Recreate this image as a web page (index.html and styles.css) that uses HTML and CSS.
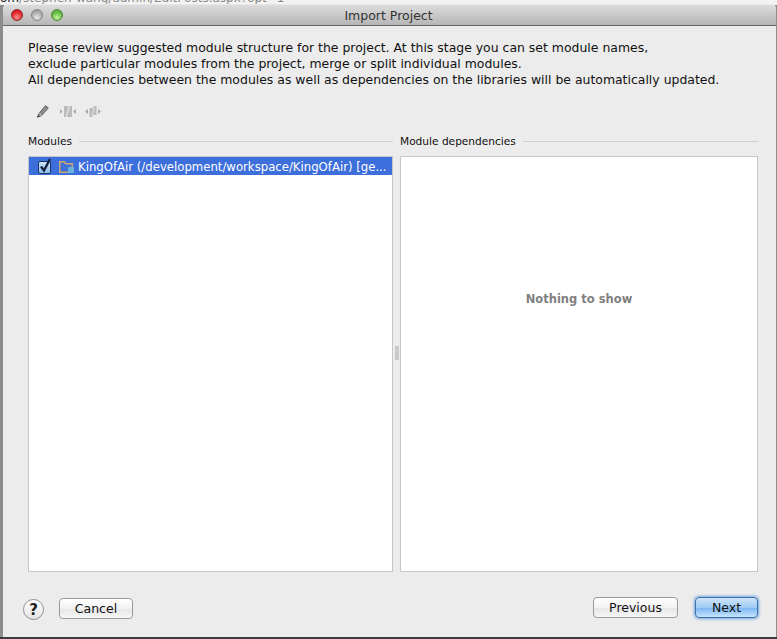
FILE: index.html
```html
<!DOCTYPE html>
<html lang="en">
<head>
<meta charset="utf-8">
<title>Import Project</title>
<link rel="stylesheet" href="styles.css">
</head>
<body>
<div class="behind"><span class="behind-text"><b class="behind-dark">om</b>/stephen-wang/admin/EditPosts.aspx?opt=1</span></div>
<main class="window">
  <header class="titlebar">
    <div class="lights">
      <span class="light red"></span>
      <span class="light grey"></span>
      <span class="light green"></span>
    </div>
    <div class="title">Import Project</div>
  </header>
  <div class="content">
    <p class="intro">Please review suggested module structure for the project. At this stage you can set module names,<br>exclude particular modules from the project, merge or split individual modules.<br>All dependencies between the modules as well as dependencies on the libraries will be automatically updated.</p>
    <div class="toolbar">
      <svg class="tool pencil" width="13" height="13" viewBox="0 0 13 13"><path d="M9.500 0.700l2.800 2.300-7 7.800-3.300 1.200 0.800-3.300z" fill="#8f8f8f" stroke="#5e5e5e" stroke-width="1"/><path d="M3.400 8.800l2 1.700" stroke="#dedede" stroke-width="1"/><path d="M1 12.500l0.500-2 1.500 1.200z" fill="#222"/></svg>
      <svg class="tool" width="16" height="11" viewBox="0 0 16 11"><path d="M0 3l2.500 2.500-2.500 2.500zM16 3l-3 2.500 3 2.500z" fill="#a8a8a8"/><path d="M4 0h8v11h-8z" fill="#bababa"/><path d="M8.500 0h1.500l-3 11h-1.500z" fill="#e2e2e2"/></svg>
      <svg class="tool" width="16" height="11" viewBox="0 0 16 11"><path d="M3 3l-3 2.500 3 2.500zM13 3l3 2.500-3 2.500z" fill="#a8a8a8"/><path d="M4.500 2h3.500v9h-3.500zM8 0h3.500v9h-3.500z" fill="#bababa"/><path d="M6.800 11l2-11h1l-2 11z" fill="#e2e2e2"/></svg>
    </div>
    <div class="panes">
      <section class="pane left">
        <div class="pane-head"><span>Modules</span><span class="rule"></span></div>
        <div class="box">
          <div class="row">
            <span class="check"><svg width="14" height="16" viewBox="0 0 14 16"><path d="M3 8.500l3 4L12 1" fill="none" stroke="#13233f" stroke-width="2.400"/></svg></span>
            <svg class="folder" width="15" height="12" viewBox="0 0 15 12"><path d="M0.750 0.750h4.500l1.500 2h6.500v8.500h-12.500z" fill="#3f6fd8" stroke="#cda673" stroke-width="1.500"/><rect x="9" y="6" width="6" height="6" fill="#6cb3dc"/></svg>
            <span class="row-text">KingOfAir (/development/workspace/KingOfAir) [ge...</span>
          </div>
        </div>
      </section>
      <div class="splitter"><span class="grip"></span></div>
      <section class="pane right">
        <div class="pane-head"><span>Module dependencies</span><span class="rule"></span></div>
        <div class="box empty">Nothing to show</div>
      </section>
    </div>
    <footer class="footer">
      <div class="footer-side cancel-side">
        <button class="help" type="button">?</button>
        <button class="btn" type="button">Cancel</button>
      </div>
      <div class="footer-side wide">
        <button class="btn prev" type="button">Previous</button>
        <button class="btn next" type="button">Next</button>
      </div>
    </footer>
  </div>
</main>
</body>
</html>
```
FILE: styles.css
```css
* { box-sizing: border-box; }
html, body { margin: 0; padding: 0; }
body {
  width: 777px;
  height: 639px;
  position: relative;
  overflow: hidden;
  background: linear-gradient(#8c8c8c 0, #8c8c8c 637px, #3c3c3c 637px);
  font-family: "DejaVu Sans", sans-serif;
  font-size: 12.5px;
  color: #111;
}
.behind {
  height: 5px;
  background: #f2f2f2;
  overflow: hidden;
  position: relative;
}
.behind-text {
  position: absolute;
  left: 0;
  top: -10px;
  font-size: 12px;
  line-height: 16px;
  color: #8a8a8a;
  white-space: nowrap;
}
.behind-dark {
  font-weight: normal;
  color: #111;
}
.window {
  position: absolute;
  left: 3px;
  top: 4px;
  width: 773px;
  height: 633px;
  display: flex;
  flex-direction: column;
  background: #ececec;
  border-radius: 5px 5px 0 0;
}
.titlebar {
  height: 22px;
  flex: none;
  position: relative;
  background: linear-gradient(#dcdcdc, #b6b6b6);
  border-top: 1px solid #e8e8e8;
  border-bottom: 1px solid #656565;
  border-radius: 5px 5px 0 0;
  display: flex;
  align-items: center;
  justify-content: center;
  padding-right: 2px;
}
.lights {
  position: absolute;
  left: 8px;
  top: 4px;
  display: flex;
  gap: 8px;
}
.light {
  width: 12px;
  height: 12px;
  border-radius: 50%;
  border: 1px solid #777;
}
.light.red { background: radial-gradient(circle at 50% 75%, #ff8f8f, #dd1d22 65%); border-color: #8d2a2c; }
.light.grey { background: radial-gradient(circle at 50% 75%, #e8e8e8, #a2a2a2 70%); border-color: #868686; }
.light.green { background: radial-gradient(circle at 50% 75%, #c4f39a, #5bb43c 65%); border-color: #4c8a38; }
.title {
  font-size: 12.5px;
  color: #333;
}
.content {
  flex: 1;
  min-height: 0;
  display: flex;
  flex-direction: column;
  padding: 14px 18px 0 25px;
}
.intro {
  margin: 0;
  font-size: 12.450px;
  line-height: 16px;
  color: #111;
  white-space: nowrap;
}
.toolbar {
  height: 20px;
  margin-top: 13px;
  padding-left: 8px;
  display: flex;
  align-items: center;
  gap: 9px;
}
.pencil { margin-right: 2px; }
.panes {
  flex: none;
  margin-top: 12px;
  height: 439px;
  display: flex;
}
.pane {
  display: flex;
  flex-direction: column;
}
.pane.left { width: 365px; }
.pane.right { width: 358px; }
.pane-head {
  height: 16px;
  flex: none;
  display: flex;
  align-items: center;
  gap: 7px;
  font-size: 10.600px;
  white-space: nowrap;
}
.rule {
  flex: 1;
  height: 1px;
  background: #cfcfcf;
}
.box {
  flex: 1;
  margin-top: 7px;
  background: #fff;
  border: 1px solid #c6c6c6;
}
.row {
  height: 18px;
  background: #3c6edc;
  display: flex;
  align-items: center;
  padding-left: 9px;
  color: #fff;
  overflow: hidden;
}
.check {
  width: 13px;
  height: 13px;
  flex: none;
  margin-top: 2px;
  background: linear-gradient(#cfe4fb, #8dbdf0);
  border: 1px solid #1d3560;
  border-radius: 2px;
  position: relative;
}
.check svg {
  position: absolute;
  left: -1px;
  top: -4px;
}
.folder { margin-left: 8px; margin-top: 1px; flex: none; }
.row-text {
  margin-left: 4px;
  margin-top: 1px;
  white-space: nowrap;
  font-size: 11.700px;
}
.splitter {
  width: 7px;
  flex: none;
  display: flex;
  align-items: center;
  justify-content: center;
}
.grip {
  width: 4px;
  height: 14px;
  background: radial-gradient(circle, #bdbdbd 0.6px, transparent 1px) 0 0 / 2px 2px;
}
.empty {
  display: flex;
  align-items: flex-start;
  justify-content: center;
  color: #808080;
  font-weight: bold;
  font-size: 11.500px;
  padding-top: 135px;
}
.footer {
  flex: 1;
  display: flex;
  justify-content: space-between;
  align-items: flex-start;
  padding-top: 25px;
}
.footer-side {
  display: flex;
  align-items: flex-start;
  gap: 15px;
}
.cancel-side { margin-top: 1px; }
.footer-side.wide { gap: 17px; }
.help {
  width: 21px;
  height: 21px;
  margin-left: -5px;
  margin-top: 1px;
  padding: 0;
  border-radius: 50%;
  border: 1px solid #8f8f8f;
  background: linear-gradient(#fff, #e4e4e4);
  font: bold 15px "DejaVu Sans", sans-serif;
  color: #222;
}
.btn {
  height: 21px;
  width: 74px;
  padding: 0;
  border: 1px solid #9a9a9a;
  border-radius: 4px;
  background: linear-gradient(#fff 0%, #f2f2f2 50%, #e6e6e6 51%, #f6f6f6 100%);
  font: 12.5px "DejaVu Sans", sans-serif;
  color: #111;
}
.btn.prev { width: 85px; }
.btn.next {
  width: 63px;
  border-color: #3f6fa8;
  background: linear-gradient(#cfe5fb 0%, #9fcbf5 50%, #79b5f0 51%, #c6e6fd 100%);
  box-shadow: 0 0 3px 1px #6ea6e0;
}
```
